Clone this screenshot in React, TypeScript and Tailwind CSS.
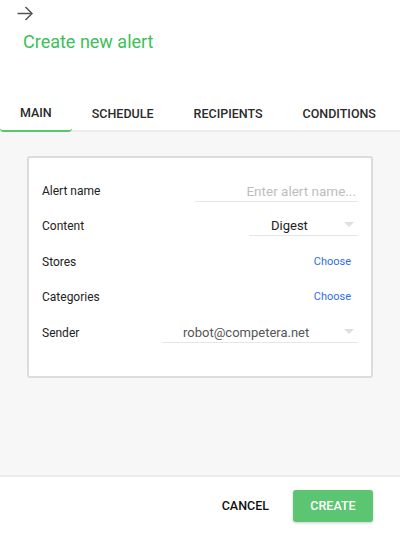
import React, { useState } from 'react';

const tabs = ['MAIN', 'SCHEDULE', 'RECIPIENTS', 'CONDITIONS'];

function Caret() {
  return (
    <svg width="10" height="6" viewBox="0 0 10 6" className="shrink-0">
      <path d="M0 0 L10 0 L5 5 Z" fill="#e0e0e0" />
    </svg>
  );
}

function Row({ label, children }: { label: string; children: React.ReactNode }) {
  return (
    <div className="flex h-[35.5px] items-center justify-between">
      <span className="text-[12px] text-[#222]">{label}</span>
      {children}
    </div>
  );
}

function App() {
  const [active, setActive] = useState<number>(0);

  return (
    <div className="flex h-[538px] w-[400px] flex-col bg-white font-['Roboto',sans-serif]">
      <div className="px-[17px] pt-[6px]">
        <svg width="16" height="15" viewBox="0 0 16 15" fill="none" stroke="#555" strokeWidth="1.5">
          <path d="M0.5 7.5 H14.5" />
          <path d="M8.5 1 L15 7.5 L8.5 14" />
        </svg>
      </div>
      <h1 className="ml-[23px] mt-[10px] text-[18px] leading-[22px] text-[#3cc057]">Create new alert</h1>

      <div className="mt-[48px] flex border-b-2 border-[#ececec]">
        {tabs.map((tab, i) => (
          <button
            key={tab}
            onClick={() => setActive(i)}
            className={
              i === active
                ? 'h-[31px] -mb-[2px] rounded-b-[4px] border-b-2 border-[#5bc46f] px-5 pb-[5px] text-[12.5px] font-medium text-[#2a2a2a]'
                : 'h-[31px] -mb-[2px] px-5 pb-[5px] text-[12.5px] font-medium text-[#2a2a2a]'
            }
          >
            {tab}
          </button>
        ))}
      </div>

      <div className="flex-1 bg-[#f7f7f7] px-[27px] pt-[24px]">
        <div className="rounded-[3px] border-2 border-[#dcdcdc] bg-white px-[13px] pb-[25px] pt-[15px]">
          <Row label="Alert name">
            <input
              placeholder="Enter alert name..."
              className="mt-[2px] h-[20px] w-[163px] border-b border-[#e6e6e6] bg-transparent pr-[2px] text-right text-[13.5px] text-[#333] outline-none placeholder:text-[#bdbdbd]"
            />
          </Row>
          <Row label="Content">
            <div className="-mt-[1px] flex h-[20px] w-[109px] items-center border-b border-[#e6e6e6] pl-[22px] pr-[4px]">
              <span className="flex-1 text-[13px] text-[#222]">Digest</span>
              <Caret />
            </div>
          </Row>
          <Row label="Stores">
            <a className="mr-[7px] text-[11px] text-[#2f6ee8]">Choose</a>
          </Row>
          <Row label="Categories">
            <a className="mr-[7px] text-[11px] text-[#2f6ee8]">Choose</a>
          </Row>
          <Row label="Sender">
            <div className="flex h-[20px] w-[196px] items-center border-b border-[#e6e6e6] pl-[21px] pr-[4px]">
              <span className="flex-1 text-[13px] text-[#555]">robot@competera.net</span>
              <Caret />
            </div>
          </Row>
        </div>
      </div>

      <div className="flex h-[63px] items-center justify-end gap-6 border-t-2 border-[#ececec] pb-[3px] pr-[27px]">
        <button className="text-[12.5px] font-medium text-[#111]">CANCEL</button>
        <button className="h-[32px] w-[80px] rounded-[3px] bg-[#5bc572] text-[12.5px] font-medium text-white shadow-[0_1px_3px_rgba(0,0,0,0.2)]">
          CREATE
        </button>
      </div>
    </div>
  );
}

export default App;
